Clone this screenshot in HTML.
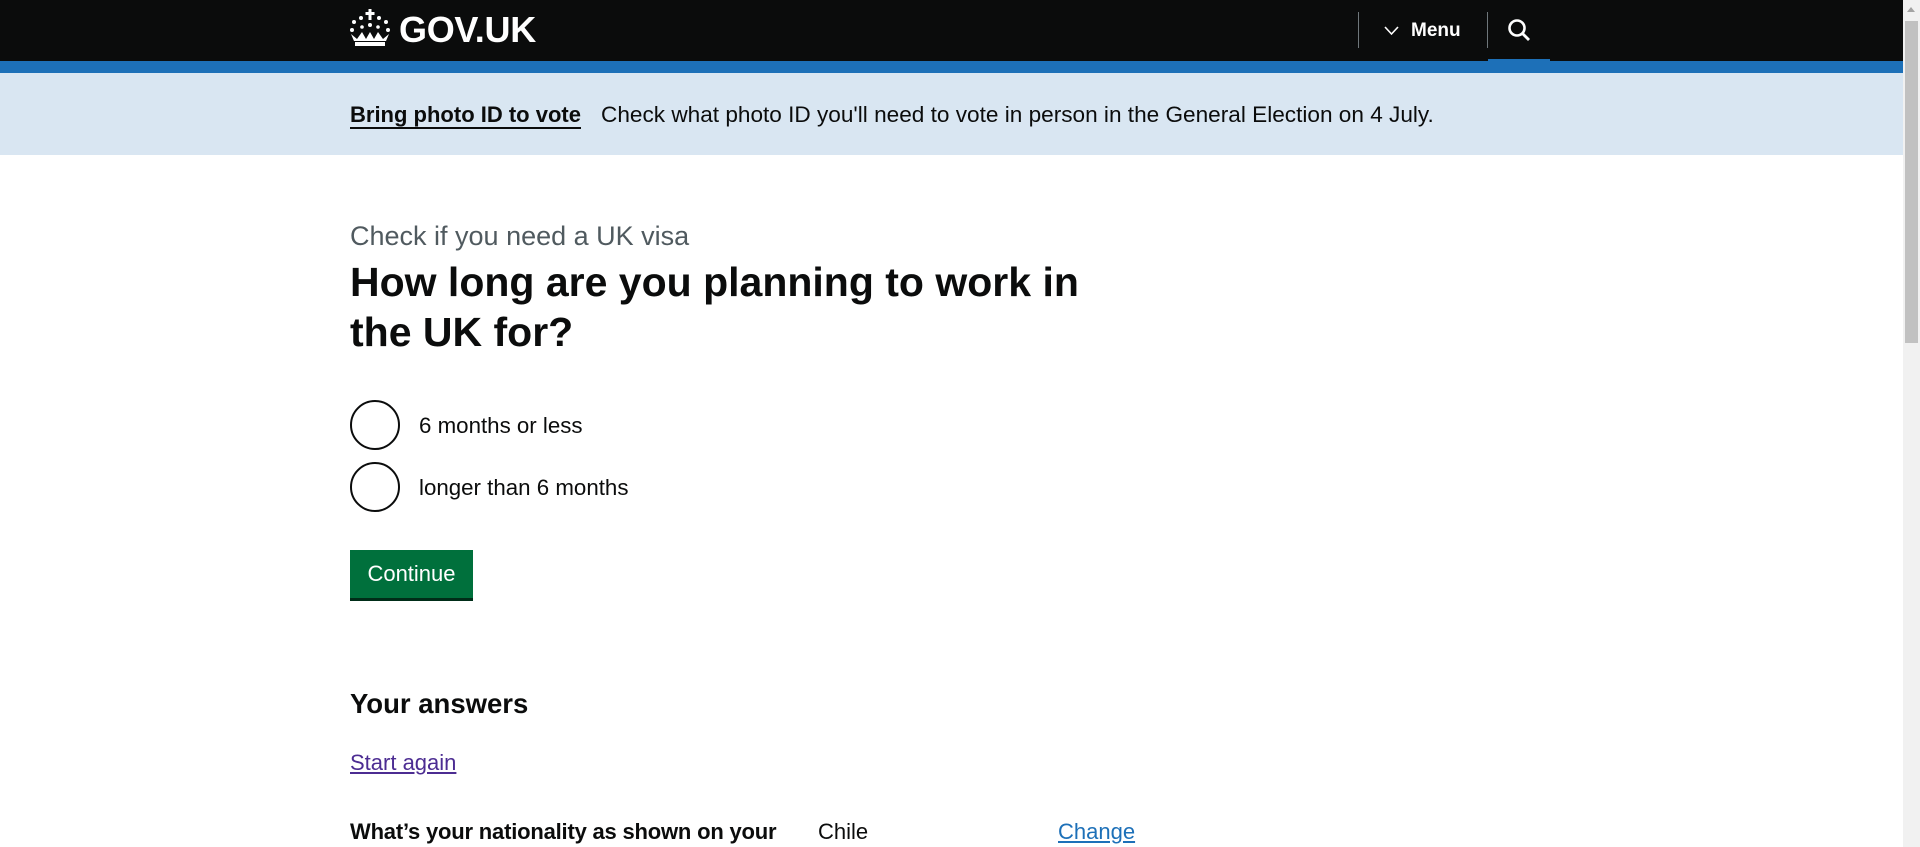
<!DOCTYPE html>
<html><head><meta charset="utf-8"><style>
*{box-sizing:border-box;margin:0;padding:0}
html,body{width:1920px;height:847px;overflow:hidden;background:#fff;font-family:"Liberation Sans",sans-serif;color:#0b0c0c}
.hdr{position:absolute;left:0;top:0;width:1903px;height:61px;background:#0b0c0c}
.blue{position:absolute;left:0;top:61px;width:1903px;height:12px;background:#1d70b8}
.band{position:absolute;left:0;top:73px;width:1903px;height:82px;background:#d9e6f2}
.sb{position:absolute;right:0;top:0;width:17px;height:847px;background:#f1f1f1}
.thumb{position:absolute;right:2px;top:21px;width:13px;height:322px;background:#c1c1c1}
.t{position:absolute;white-space:nowrap}
</style></head><body>
<div class="hdr"></div><div class="blue"></div><div class="band"></div>
<div class="sb"><div class="thumb"></div><div style="position:absolute;left:4px;top:7px;border:4px solid transparent;border-bottom:5px solid #a3a3a3;border-top:0"></div></div>
<svg style="position:absolute;left:349px;top:8px" width="42" height="40" viewBox="0 0 42 40" fill="#fff">
<rect x="19.5" y="1" width="3" height="11"/><rect x="16.5" y="4" width="9" height="3"/>
<circle cx="12" cy="10" r="2"/><circle cx="30" cy="10" r="2"/><circle cx="5" cy="14" r="2"/><circle cx="37" cy="14" r="2"/>
<circle cx="3" cy="22" r="2"/><circle cx="39" cy="22" r="2"/><circle cx="21" cy="17" r="2"/>
<circle cx="13" cy="19" r="1.8"/><circle cx="29" cy="19" r="1.8"/>
<path d="M2 26 L8 31 L13 24 L17 31 L21 24 L25 31 L29 24 L34 31 L40 26 L37 33 L5 33 Z"/>
<rect x="6" y="34" width="30" height="4"/>
</svg>
<div class="t" style="left:399px;top:9px;font-size:36px;font-weight:bold;color:#fff;letter-spacing:-0.3px">GOV.UK</div>
<div style="position:absolute;left:1358px;top:12px;width:1px;height:36px;background:#6f777b"></div>
<div style="position:absolute;left:1487px;top:12px;width:1px;height:36px;background:#6f777b"></div>
<svg style="position:absolute;left:1384px;top:26px" width="15" height="10" viewBox="0 0 15 10"><path d="M1 1 L7.5 8 L14 1" stroke="#fff" stroke-width="1.6" fill="none"/></svg>
<div class="t" style="left:1411px;top:20px;font-size:19px;font-weight:bold;color:#fff">Menu</div>
<svg style="position:absolute;left:1507px;top:18px" width="26" height="26" viewBox="0 0 26 26"><circle cx="10" cy="10" r="7.5" stroke="#fff" stroke-width="2.6" fill="none"/><path d="M15.5 15.5 L22 22" stroke="#fff" stroke-width="2.8"/></svg>
<div style="position:absolute;left:1488px;top:59px;width:62px;height:3px;background:#1d70b8"></div>
<div class="t" style="left:350px;top:103px;font-size:22px;font-weight:bold;border-bottom:2px solid #0b0c0c;line-height:24px">Bring photo ID to vote</div>
<div class="t" style="left:601px;top:103px;font-size:22.6px;line-height:24px">Check what photo ID you'll need to vote in person in the General Election on 4 July.</div>
<div class="t" style="left:350px;top:221px;font-size:27px;color:#505a5f">Check if you need a UK visa</div>
<div style="position:absolute;left:350px;top:257px;width:770px;font-size:41px;font-weight:bold;line-height:50px;letter-spacing:0px">How long are you planning to work in the UK for?</div>
<div style="position:absolute;left:350px;top:400px;width:50px;height:50px;border:2.5px solid #0b0c0c;border-radius:50%"></div>
<div class="t" style="left:419px;top:413px;font-size:22.3px">6 months or less</div>
<div style="position:absolute;left:350px;top:462px;width:50px;height:50px;border:2.5px solid #0b0c0c;border-radius:50%"></div>
<div class="t" style="left:419px;top:475px;font-size:22.3px">longer than 6 months</div>
<div style="position:absolute;left:350px;top:550px;width:123px;height:48px;background:#00703c;box-shadow:0 3px 0 #002d18;color:#fff;font-size:22px;text-align:center;line-height:48px">Continue</div>
<div class="t" style="left:350px;top:688px;font-size:27.5px;font-weight:bold">Your answers</div>
<div class="t" style="left:350px;top:750px;font-size:22px;color:#4c2c92;text-decoration:underline">Start again</div>
<div class="t" style="left:350px;top:819px;font-size:22px;font-weight:bold;letter-spacing:-0.2px">What’s your nationality as shown on your</div>
<div class="t" style="left:818px;top:819px;font-size:22px">Chile</div>
<div class="t" style="left:1058px;top:819px;font-size:22px;color:#1d70b8;text-decoration:underline">Change</div>
</body></html>
